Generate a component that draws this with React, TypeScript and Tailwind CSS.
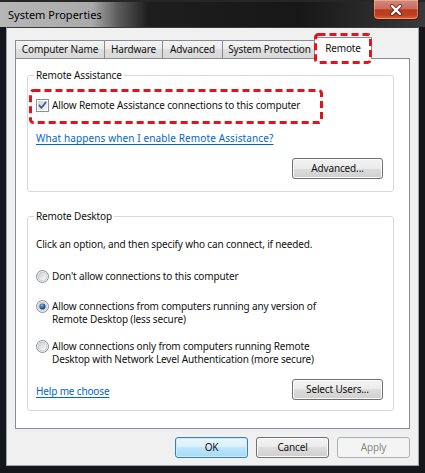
import React from "react";

function CheckBox() {
  return (
    <svg width="13" height="13" viewBox="0 0 13 13" className="shrink-0">
      <defs>
        <linearGradient id="cbg" x1="0" y1="0" x2="1" y2="1">
          <stop offset="0" stopColor="#cdd2d8" />
          <stop offset="1" stopColor="#f7f7f7" />
        </linearGradient>
      </defs>
      <rect x="0.5" y="0.5" width="12" height="12" fill="#ffffff" stroke="#8e8f8f" />
      <rect x="2" y="2" width="9" height="9" fill="url(#cbg)" />
      <path d="M3.3 6.4 L5.4 8.9 L9.8 3.4" stroke="#4b5f8a" strokeWidth="1.7" fill="none" strokeLinecap="round" strokeLinejoin="round" />
    </svg>
  );
}

function Radio({ checked }: { checked?: boolean }) {
  return (
    <svg width="13" height="13" viewBox="0 0 13 13" className="shrink-0">
      <defs>
        <linearGradient id="rgb" x1="0" y1="0" x2="1" y2="1">
          <stop offset="0" stopColor="#c9cbcd" />
          <stop offset="1" stopColor="#ffffff" />
        </linearGradient>
        <radialGradient id="rdot" cx="0.4" cy="0.35" r="0.75">
          <stop offset="0" stopColor="#8cc0ec" />
          <stop offset="0.45" stopColor="#2e68a8" />
          <stop offset="1" stopColor="#173a6c" />
        </radialGradient>
      </defs>
      <circle cx="6.5" cy="6.5" r="6" fill="#f4f4f4" stroke="#8c8f93" />
      <circle cx="6.5" cy="6.5" r="4.4" fill="url(#rgb)" stroke="#c3c6ca" strokeWidth="0.8" />
      {checked && <circle cx="6.5" cy="6.5" r="3.1" fill="url(#rdot)" />}
    </svg>
  );
}

function Button({ children, kind, className }: { children: React.ReactNode; kind?: "default" | "disabled"; className?: string }) {
  let cls =
    "border-[#707070] text-[#111] bg-[linear-gradient(to_bottom,#f3f3f3_0%,#ebebeb_50%,#dddddd_50%,#cfcfcf_100%)] shadow-[inset_0_0_0_1px_#fbfbfb]";
  if (kind === "default")
    cls =
      "border-[#3c7fb1] text-[#111] bg-[linear-gradient(to_bottom,#eaf6fd_0%,#d9f0fc_50%,#bee6fd_50%,#a7d9f5_100%)] shadow-[inset_0_0_0_1px_#c9ecfc]";
  if (kind === "disabled") cls = "border-[#adb2b5] text-[#8a8a8a] bg-[#f4f4f4]";
  return (
    <div className={`h-[21px] border rounded-[3px] flex items-center justify-center ${cls} ${className ?? ""}`}>
      {children}
    </div>
  );
}

function RedBox({ w, h }: { w: number; h: number }) {
  return (
    <svg width={w} height={h} className="absolute left-0 top-0 pointer-events-none" viewBox={`0 0 ${w} ${h}`}>
      <rect
        x="1.5"
        y="1.5"
        width={w - 3}
        height={h - 3}
        rx="3"
        fill="none"
        stroke="#e3121b"
        strokeWidth="3"
        strokeDasharray="7 4"
      />
    </svg>
  );
}

const tabBase =
  "h-[18px] border border-b-0 border-[#898c95] bg-[linear-gradient(to_bottom,#f4f4f4_0%,#ebebeb_50%,#dedede_50%,#d9d9d9_100%)] flex items-center justify-center whitespace-nowrap overflow-hidden";

export default function App() {
  return (
    <div className="w-[425px] h-[473px] bg-[#14161b] flex flex-col overflow-hidden font-['Noto_Sans',sans-serif] text-[10px] leading-[13px] tracking-[-0.15px] text-[#111]">
      {/* Title bar */}
      <div className="h-[27px] shrink-0 flex items-start bg-[linear-gradient(to_right,#b6b6b6_0px,#aaaaaa_92px,#5c5c5c_118px,#1e1e1e_148px,#171717_300px,#3a3a3a_100%)] shadow-[inset_0_2px_0_#262626]">
        <span className="ml-[8px] mt-[7px] text-[11px] leading-[15px] tracking-normal text-black">System Properties</span>
        <div className="ml-auto mr-[6px] w-[46px] h-[20px] rounded-b-[5px] border border-t-0 border-[#4a1a10] bg-[linear-gradient(to_bottom,#d38a7b_0%,#c76e5c_45%,#b8391e_52%,#c0401f_80%,#dc6637_100%)] shadow-[inset_0_0_0_1px_rgba(255,210,190,0.45)] flex items-center justify-center">
          <svg width="14" height="12" viewBox="0 0 14 12">
            <path d="M3 2 L11 10 M11 2 L3 10" stroke="rgba(60,15,5,0.65)" strokeWidth="4" strokeLinecap="round" />
            <path d="M3 2 L11 10 M11 2 L3 10" stroke="#ffffff" strokeWidth="2.4" strokeLinecap="round" />
          </svg>
        </div>
      </div>

      {/* Client area */}
      <div className="mx-[6px] h-[439px] shrink-0 border border-[#9ea2a9] border-t-[#3a3a3a] bg-[#f0f0f0] flex flex-col px-[8px] pt-[9px]">
        {/* Tabs */}
        <div className="h-[21px] shrink-0 flex items-end relative z-10">
          <div className={`${tabBase} w-[90px]`}>Computer Name</div>
          <div className={`${tabBase} w-[59px] -ml-px`}>Hardware</div>
          <div className={`${tabBase} w-[61px] -ml-px`}>Advanced</div>
          <div className={`${tabBase} w-[95px] -ml-px`}>System Protection</div>
          <div className="relative h-[22px] w-[58px] -ml-[3px] -mb-px border border-b-0 border-[#898c95] bg-white flex items-center justify-center pb-[1px]">
            Remote
            <div className="absolute -left-px -top-[5px] w-[58px] h-[31px]">
              <RedBox w={58} h={31} />
            </div>
          </div>
        </div>

        {/* Tab panel */}
        <div className="h-[371px] shrink-0 border border-[#898c95] bg-white flex flex-col pl-[11px] pt-[10px]">
          {/* Remote Assistance */}
          <fieldset className="w-[367px] border border-[#d5d9dc] rounded-[3px] px-[8px] pb-[12px]">
            <legend className="px-[2px] -ml-[2px] leading-[13px]">Remote Assistance</legend>
            <div className="flex flex-col">
              <div className="relative mt-[7px] -ml-[7px] w-[294px] h-[35px] flex items-center gap-[3px] pl-[7px] pb-[3px]">
                <CheckBox />
                <span>Allow Remote Assistance connections to this computer</span>
                <RedBox w={294} h={35} />
              </div>
              <div className="mt-[8px]">
                <span className="text-[#0066cc] underline underline-offset-[2px] tracking-[0.12px]">What happens when I enable Remote Assistance?</span>
              </div>
              <div className="mt-[13px] flex justify-end pr-[2px]">
                <Button className="w-[91px]">Advanced...</Button>
              </div>
            </div>
          </fieldset>

          {/* Remote Desktop */}
          <fieldset className="mt-[18px] w-[367px] border border-[#d5d9dc] rounded-[3px] px-[8px] pb-[10px]">
            <legend className="px-[2px] -ml-[2px] leading-[13px]">Remote Desktop</legend>
            <div className="flex flex-col">
              <div className="mt-[15px]">Click an option, and then specify who can connect, if needed.</div>
              <div className="mt-[19px] flex items-start gap-[3px]">
                <Radio />
                <span>Don't allow connections to this computer</span>
              </div>
              <div className="mt-[17px] flex items-start gap-[3px]">
                <Radio checked />
                <span>
                  Allow connections from computers running any version of
                  <br />
                  Remote Desktop (less secure)
                </span>
              </div>
              <div className="mt-[14px] flex items-start gap-[3px]">
                <Radio />
                <span>
                  Allow connections only from computers running Remote
                  <br />
                  Desktop with Network Level Authentication (more secure)
                </span>
              </div>
              <div className="mt-[13px] flex justify-between items-start pr-[2px]">
                <span className="mt-[6px] text-[#0066cc] underline underline-offset-[2px]">Help me choose</span>
                <Button className="w-[91px]">Select Users...</Button>
              </div>
            </div>
          </fieldset>
        </div>

        {/* Bottom buttons */}
        <div className="mt-[8px] flex justify-end gap-[8px]">
          <Button kind="default" className="w-[73px]">OK</Button>
          <Button className="w-[73px]">Cancel</Button>
          <Button kind="disabled" className="w-[73px]">Apply</Button>
        </div>
      </div>
    </div>
  );
}
